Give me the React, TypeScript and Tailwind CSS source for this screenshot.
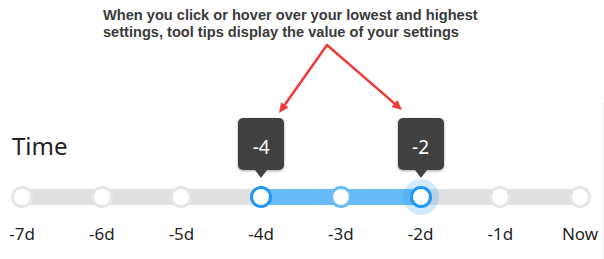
import React from "react";

const labels = ["-7d", "-6d", "-5d", "-4d", "-3d", "-2d", "-1d", "Now"];

function Tooltip({ value, pos }: { value: string; pos: number }) {
  return (
    <div
      className="absolute bottom-full mb-[1px] flex -translate-x-1/2 flex-col items-center"
      style={{ left: `${pos}%` }}
    >
      <div className="h-[52px] w-[46px] rounded-[5px] bg-[#404040] pt-[17px] text-center text-[19px] leading-[24px] text-white shadow-[0_1px_3px_rgba(0,0,0,0.35)]">
        {value}
      </div>
      <div className="h-0 w-0 border-x-[6px] border-t-[8px] border-x-transparent border-t-[#404040]" />
    </div>
  );
}

export default function App() {
  const step = 100 / 7;
  const low = 3;
  const high = 5;
  return (
    <div
      className="relative h-[259px] w-[604px] overflow-hidden bg-white"
      style={{ fontFamily: '"Noto Sans", sans-serif' }}
    >
      <p
        className="h-[40px] pl-[103px] pt-[7px] text-[14.6px] font-bold leading-[17px] text-[#3a3a3a]"
        style={{ fontFamily: '"Liberation Sans", Arial, sans-serif' }}
      >
        When you click or hover over your lowest and highest
        <br />
        settings, tool tips display the value of your settings
      </p>

      <svg
        className="pointer-events-none absolute left-0 top-0"
        width="604"
        height="259"
        viewBox="0 0 604 259"
      >
        <g stroke="#f03a3a" strokeWidth="2.5" fill="none" strokeLinecap="round">
          <path d="M327 45 L284.8 104.8" />
          <path d="M327 45 L394.4 103.4" />
        </g>
        <g fill="#f03a3a">
          <polygon points="279,113 288.5,107.4 281.1,102.2" />
          <polygon points="402,110 391.5,106.9 397.4,100.1" />
        </g>
      </svg>

      <div className="mt-[62px] flex h-[157px] w-full flex-col border-r border-[#eeeeee]">
        <h2 className="pl-[12px] pt-[28px] text-[24px] font-normal leading-[32px] text-[#222222]">
          Time
        </h2>

        <div className="ml-[22px] mt-[17px] h-[36px] w-[558px]">
          <div className="relative h-full w-full">
            <div className="absolute left-0 right-0 top-[10px] h-[16px] bg-[#e0e0e0]" />
            <div
              className="absolute top-[10px] h-[16px] bg-[#66bbf8]"
              style={{ left: `${low * step}%`, width: `${(high - low) * step}%` }}
            />
            {labels.map((_, i) => {
              const active = i === low || i === high;
              const inRange = i > low && i < high;
              return (
                <div
                  key={i}
                  className="absolute top-1/2 -translate-x-1/2 -translate-y-1/2"
                  style={{ left: `${i * step}%` }}
                >
                  {i === high && (
                    <div className="absolute left-1/2 top-1/2 h-[36px] w-[36px] -translate-x-1/2 -translate-y-1/2 rounded-full bg-[rgba(33,150,243,0.2)]" />
                  )}
                  <div
                    className={
                      active
                        ? "relative h-[22px] w-[22px] rounded-full border-[3px] border-[#2196f3] bg-white"
                        : inRange
                        ? "relative h-[22px] w-[22px] rounded-full border-[3px] border-[#66bbf8] bg-white"
                        : "relative h-[22px] w-[22px] rounded-full border-[3px] border-[#e6e6e6] bg-white"
                    }
                  />
                </div>
              );
            })}
            <Tooltip value="-4" pos={low * step} />
            <Tooltip value="-2" pos={high * step} />
          </div>
        </div>

        <div className="-ml-[17.8px] mt-[7px] grid w-[637.7px] grid-cols-8 text-center text-[17px] leading-[24px] text-[#1f1f1f]">
          {labels.map((l) => (
            <span key={l}>{l}</span>
          ))}
        </div>
      </div>
    </div>
  );
}
